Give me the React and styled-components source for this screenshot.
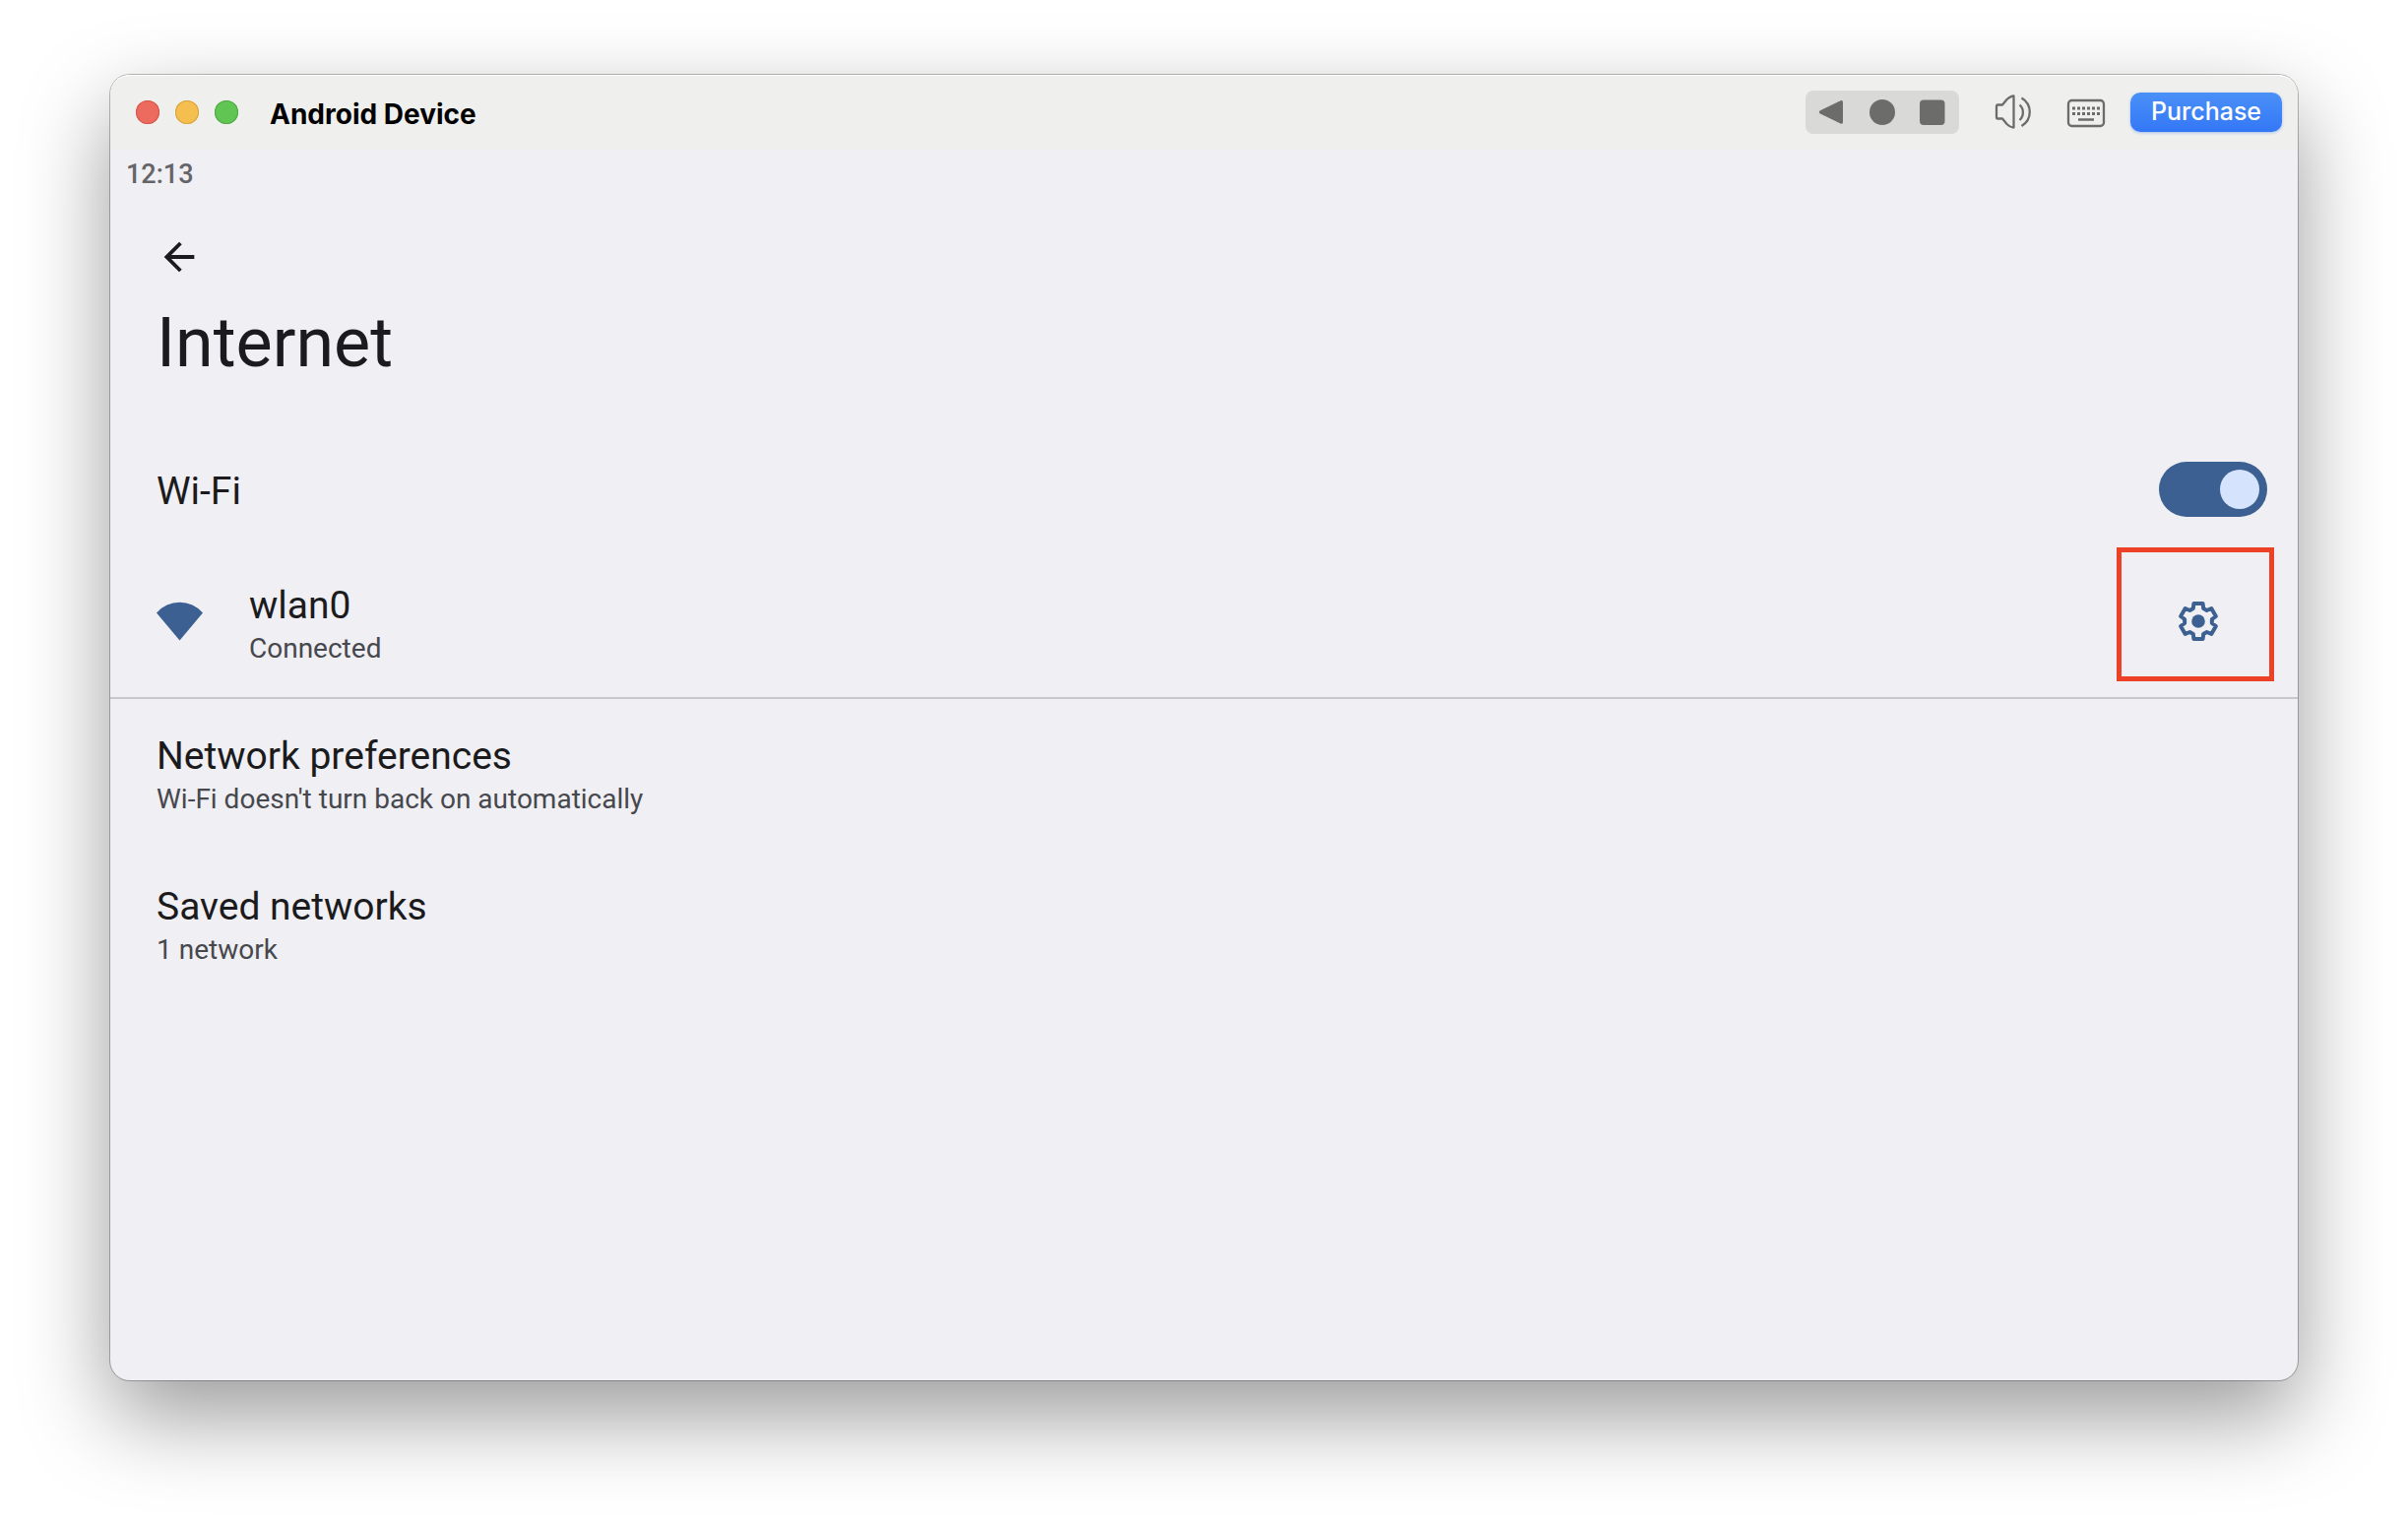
import React, { useState } from "react";
import styled, { createGlobalStyle } from "styled-components";

// one tooth pointing up, turned six times round the centre
const TOOTH = [[-5.2, -13], [-4.6, -18], [4.6, -18], [5.2, -13]];

const gearPoints = [0, 60, 120, 180, 240, 300]
  .flatMap((deg) => {
    const a = (deg * Math.PI) / 180;
    return TOOTH.map(([x, y]) => [
      24 + x * Math.cos(a) - y * Math.sin(a),
      24 + x * Math.sin(a) + y * Math.cos(a),
    ]);
  })
  .map(([x, y]) => `${x.toFixed(2)},${y.toFixed(2)}`)
  .join(" ");

const App = () => {
  const [wifi, setWifi] = useState(true);

  return (
    <Desktop>
      <GlobalStyle />
      <Window>
        <TitleBar>
          <Lights>
            <Light type="button" aria-label="Close" $color="#ec6a5e" $edge="#d5554a" />
            <Light type="button" aria-label="Minimize" $color="#f4bf4f" $edge="#d8a13a" />
            <Light type="button" aria-label="Zoom" $color="#61c554" $edge="#4fa842" />
          </Lights>
          <WindowTitle>Android Device</WindowTitle>
          <NavGroup>
            <NavButton type="button" aria-label="Back">
              <svg width="26" height="26" viewBox="0 0 26 26">
                <path d="M2 11.2 22.6 1.2Q25 .4 25 3v20q0 2.4-2.4 1.4L2 14.4Q-.4 12.8 2 11.2z" />
              </svg>
            </NavButton>
            <NavButton type="button" aria-label="Home">
              <svg width="26" height="26" viewBox="0 0 26 26">
                <circle cx="13" cy="13" r="13" />
              </svg>
            </NavButton>
            <NavButton type="button" aria-label="Recents">
              <svg width="26" height="26" viewBox="0 0 26 26">
                <rect x="-1" y="0.5" width="25.5" height="25.5" rx="4" />
              </svg>
            </NavButton>
          </NavGroup>
          <ToolButton type="button" aria-label="Volume">
            <svg width="40" height="36" viewBox="0 0 40 36">
              <path d="M4 10.500h5L13.500 5q4-3.500 7-3.500v32q-3 0-7-3.500L9 24.500H4q-1 0-1-1.500V12q0-1.500 1-1.500z" />
              <path d="M26.500 10.500c4.500 4 4.500 11.500 0 15.500M28.500 3.500c11 6.500 11 22 0 28.500" />
            </svg>
          </ToolButton>
          <ToolButton type="button" aria-label="Keyboard">
            <svg width="40" height="30" viewBox="0 0 40 30">
              <rect x="2" y="3" width="36" height="26" rx="3.500" />
              <path d="M6 11h28M6 16.500h28" strokeWidth="3" strokeDasharray="3 2" />
              <path d="M12 22.500h16" strokeWidth="2.500" />
            </svg>
          </ToolButton>
          <PurchaseButton type="button">Purchase</PurchaseButton>
        </TitleBar>

        <Screen>
          <StatusBar>12:13</StatusBar>
          <BackButton type="button" aria-label="Navigate up">
            <svg width="46" height="46" viewBox="0 0 24 24">
              <path d="M20 11H7.830l5.590-5.590L12 4l-8 8 8 8 1.410-1.410L7.830 13H20z" />
            </svg>
          </BackButton>
          <Heading>Internet</Heading>

          <WifiRow>
            <WifiLabel htmlFor="wifi">Wi-Fi</WifiLabel>
            <Switch
              id="wifi"
              type="checkbox"
              role="switch"
              checked={wifi}
              onChange={(e) => setWifi(e.target.checked)}
            />
          </WifiRow>

          <Row $divider>
            <Signal>
              <svg width="48" height="40" viewBox="0 0 48 40">
                <path d="M0 11.500A31 31 0 0 1 47 11.500L23.500 39.500z" />
              </svg>
            </Signal>
            <Texts>
              <Title>wlan0</Title>
              <Summary>Connected</Summary>
            </Texts>
            <GearButton type="button" aria-label="Network settings">
              <svg width="48" height="48" viewBox="0 0 48 48">
                <polygon points={gearPoints} fill="none" stroke="#3c6091" strokeWidth="4" strokeLinejoin="round" />
                <circle cx="24" cy="24" r="6.800" />
              </svg>
            </GearButton>
            <Marker />
          </Row>

          <Row>
            <Texts>
              <Title>Network preferences</Title>
              <Summary>Wi-Fi doesn't turn back on automatically</Summary>
            </Texts>
          </Row>

          <Row>
            <Texts>
              <Title>Saved networks</Title>
              <Summary>1 network</Summary>
            </Texts>
          </Row>
        </Screen>
      </Window>
    </Desktop>
  );
};

export default App;


const GlobalStyle = createGlobalStyle`
  * {
    box-sizing: border-box;
  }
  body {
    margin: 0;
    background-color: #ffffff;
    font-family: Roboto, sans-serif;
  }
  button {
    padding: 0;
    border: none;
    background: none;
    cursor: pointer;
  }
  svg {
    display: block;
    overflow: visible;
  }
`;

const Desktop = styled.div`
  display: flex;
  min-height: 100vh;
  padding: 76px 112px 148px;
  overflow: hidden;
`;

const Window = styled.main`
  display: flex;
  flex-direction: column;
  flex: 1;
  border-radius: 20px;
  background-color: #f0eff4;
  box-shadow: 0 0 0 1px rgba(0, 0, 0, 0.26), 0 36px 90px rgba(0, 0, 0, 0.4);
`;

const TitleBar = styled.header`
  display: flex;
  align-items: center;
  height: 76px;
  padding: 0 16px 0 26px;
  border-radius: 20px 20px 0 0;
  background-color: #efefed;
  box-shadow: inset 0 2px 0 -1px #ffffff;
`;

const Lights = styled.div`
  display: flex;
  gap: 16px;
`;

const Light = styled.button`
  width: 24px;
  height: 24px;
  border-radius: 50%;
  background-color: ${(props) => props.$color};
  box-shadow: inset 0 0 0 1px ${(props) => props.$edge};
`;

const WindowTitle = styled.div`
  margin-left: 32px;
  margin-right: auto;
  padding-top: 4px;
  font-family: Inter, sans-serif;
  font-size: 28px;
  font-weight: 700;
  line-height: 36px;
  color: #000000;
`;

const NavGroup = styled.nav`
  display: flex;
  margin-right: 10px;
  border-radius: 8px;
  background-color: #d9d9d7;
`;

const NavButton = styled.button`
  display: flex;
  align-items: center;
  justify-content: center;
  width: 52px;
  height: 44px;
  fill: #6c6c6b;
`;

const ToolButton = styled.button`
  margin: 0 9px 0 25px;
  fill: none;
  stroke: #6c6c6b;
  stroke-width: 2.3;
  stroke-linecap: butt;
  stroke-linejoin: round;
`;

const PurchaseButton = styled.button`
  width: 154px;
  height: 40px;
  margin-left: 16px;
  padding-bottom: 2px;
  border-radius: 10px;
  background: linear-gradient(#4a90f8, #3477f6);
  box-shadow: 0 1px 3px rgba(52, 119, 246, 0.4);
  font-family: Inter, sans-serif;
  font-size: 25px;
  font-weight: 500;
  line-height: 36px;
  color: #ffffff;
`;

const Screen = styled.section`
  display: flex;
  flex-direction: column;
  color: #1b1b1d;
`;

const StatusBar = styled.div`
  padding: 8px 16px 0;
  font-size: 27px;
  font-weight: 500;
  line-height: 34px;
  color: #656567;
`;

const BackButton = styled.button`
  align-self: flex-start;
  margin: 44px 47px 0;
  fill: #1b1b1d;
`;

const Heading = styled.h1`
  margin: 22px 47px 47px;
  font-size: 70px;
  font-weight: 400;
  line-height: 84px;
`;

const Row = styled.div`
  position: relative;
  display: flex;
  align-items: center;
  height: 153px;
  padding: 0 31px 0 47px;
  border-bottom: 2px solid ${(props) => (props.$divider ? "#c8c7cc" : "transparent")};
`;

const WifiRow = styled(Row)`
  justify-content: space-between;
  height: 120px;
  border-bottom: none;
`;

const Signal = styled.div`
  width: 94px;
  padding-bottom: 4px;
  fill: #3c6091;
`;

const Texts = styled.div`
  display: flex;
  flex-direction: column;
  flex: 1;
  gap: 3px;
  padding-top: 2px;
`;

const Title = styled.div`
  font-size: 39px;
  line-height: 48px;
`;

const WifiLabel = styled.label`
  padding-top: 4px;
  font-size: 39px;
  line-height: 48px;
`;

const Summary = styled.div`
  font-size: 28px;
  line-height: 34px;
  color: #46484d;
`;

const Switch = styled.input`
  appearance: none;
  display: flex;
  align-items: center;
  justify-content: ${(props) => (props.checked ? "flex-end" : "flex-start")};
  width: 110px;
  height: 56px;
  margin: 0;
  padding: 0 8px;
  border-radius: 28px;
  background-color: ${(props) => (props.checked ? "#3c6091" : "#8e9099")};
  cursor: pointer;

  &::before {
    content: "";
    width: 40px;
    height: 40px;
    border-radius: 50%;
    background-color: #d5e3fd;
  }
`;

const GearButton = styled.button`
  display: flex;
  align-items: center;
  justify-content: center;
  width: 140px;
  height: 100px;
  padding-bottom: 4px;
  fill: #3c6091;
`;

// red call-out drawn over the settings button
const Marker = styled.div`
  position: absolute;
  top: -1px;
  right: 24px;
  width: 160px;
  height: 136px;
  border: 5px solid #ec4127;
  pointer-events: none;
`;
